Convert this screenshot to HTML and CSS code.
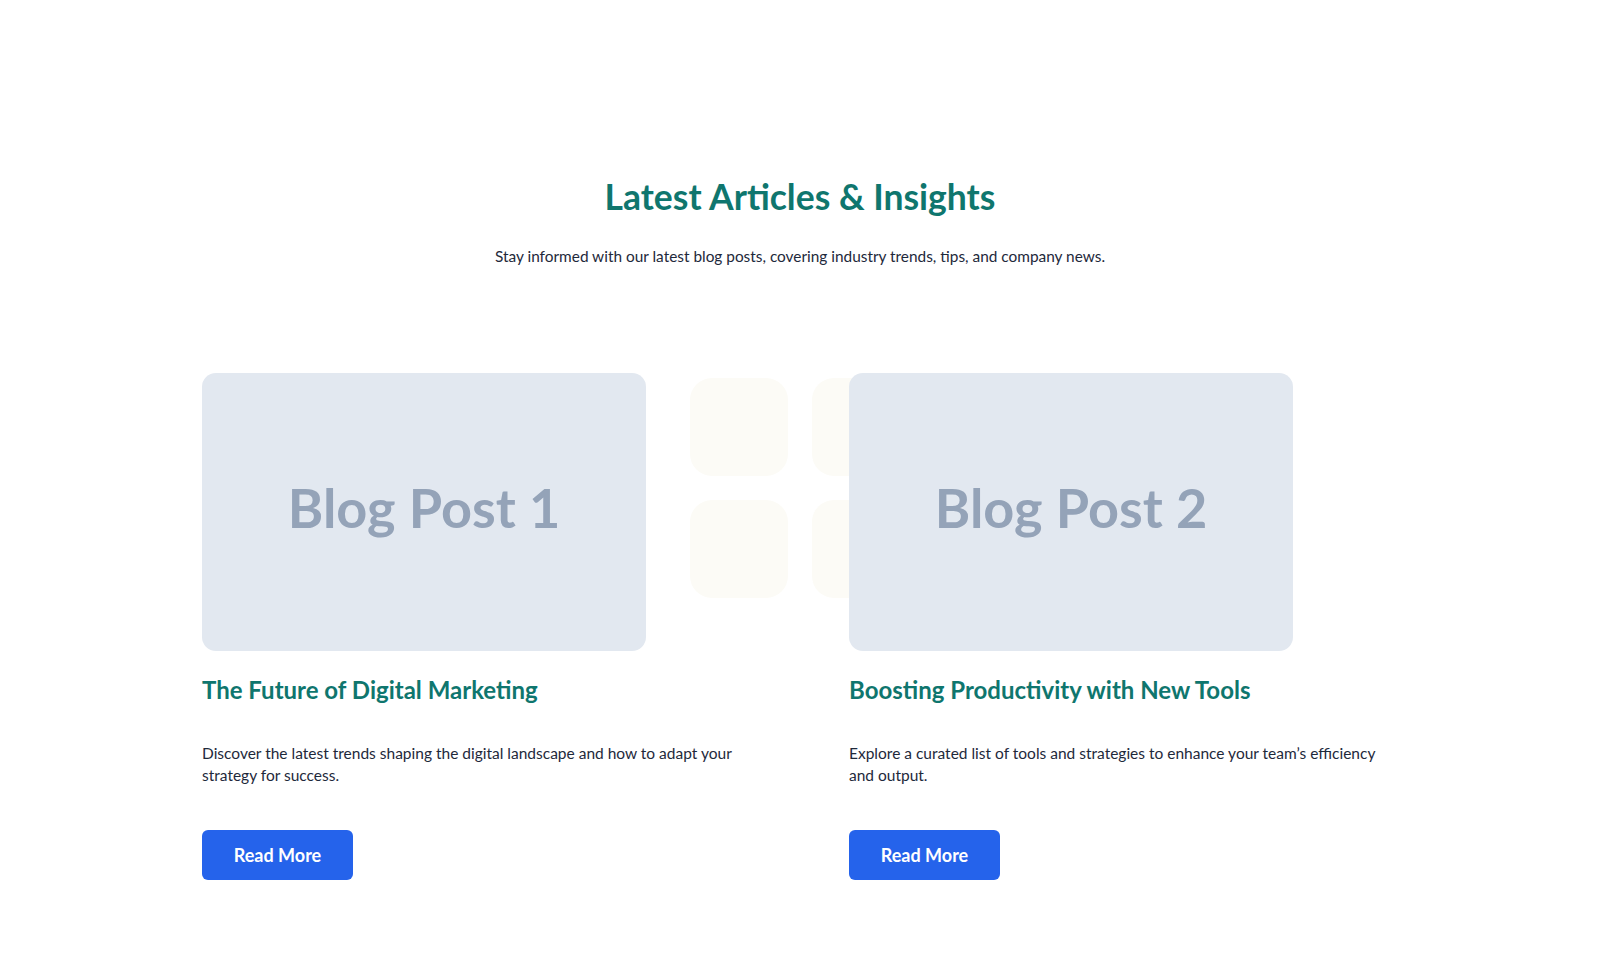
FILE: index.html
```html
<!DOCTYPE html>
<html lang="en">
<head>
<meta charset="utf-8">
<title>Latest Articles &amp; Insights</title>
<link rel="stylesheet" href="styles.css">
</head>
<body>
<section class="blog">
  <header class="blog-head">
    <h2 class="blog-title">Latest Articles &amp; Insights</h2>
    <p class="blog-sub">Stay informed with our latest blog posts, covering industry trends, tips, and company news.</p>
  </header>

  <div class="blog-grid">
    <div class="deco" aria-hidden="true">
      <span></span><span></span><span></span><span></span>
    </div>

    <article class="post">
      <div class="post-thumb"><span>Blog Post 1</span></div>
      <h3 class="post-title">The Future of Digital Marketing</h3>
      <p class="post-text">Discover the latest trends shaping the digital landscape and how to adapt your strategy for success.</p>
      <a class="btn" href="#">Read More</a>
    </article>

    <article class="post">
      <div class="post-thumb"><span>Blog Post 2</span></div>
      <h3 class="post-title">Boosting Productivity with New Tools</h3>
      <p class="post-text">Explore a curated list of tools and strategies to enhance your team’s efficiency and output.</p>
      <a class="btn" href="#">Read More</a>
    </article>
  </div>
</section>
</body>
</html>
```

FILE: styles.css
```css
* { box-sizing: border-box; }

body {
  margin: 0;
  background: #ffffff;
  font-family: "Lato", "Noto Sans", sans-serif;
  color: #1e293b;
}

.blog {
  padding: 175px 0 80px;
}

.blog-head {
  text-align: center;
}

.blog-title {
  margin: 0;
  font-size: 35.5px;
  line-height: 43px;
  font-weight: 700;
  color: #0f766e;
}

.blog-sub {
  margin: 27px 0 0;
  font-size: 15.4px;
  line-height: 22px;
  color: #1e293b;
}

.blog-grid {
  position: relative;
  width: 1196px;
  margin: 106px auto 0;
  display: grid;
  grid-template-columns: 549px 549px;
  column-gap: 98px;
}

/* faint tile pattern sitting behind the cards */
.deco {
  position: absolute;
  left: 488px;
  top: 5px;
  display: grid;
  grid-template-columns: 98px 98px;
  grid-auto-rows: 98px;
  gap: 24px;
  z-index: 0;
}

.deco span {
  background: #fcfbf6;
  border-radius: 22px;
}

.post {
  position: relative;
  z-index: 1;
}

.post-thumb {
  width: 444px;
  height: 278px;
  padding-bottom: 10px;
  border-radius: 14px;
  background: #e2e8f0;
  display: flex;
  align-items: center;
  justify-content: center;
}

.post-thumb span {
  font-family: "Lato", sans-serif;
  font-weight: 700;
  font-size: 54px;
  color: #94a3b8;
}

.post-title {
  margin: 23px 0 0;
  font-size: 24px;
  line-height: 31px;
  font-weight: 700;
  color: #0f766e;
}

.post-text {
  margin: 38px 0 0;
  font-size: 15.5px;
  line-height: 21.5px;
  color: #1e293b;
}

.btn {
  display: inline-flex;
  align-items: center;
  justify-content: center;
  margin-top: 44px;
  width: 151px;
  height: 50px;
  border-radius: 6px;
  background: #2563eb;
  color: #ffffff;
  font-size: 18px;
  font-weight: 700;
  text-decoration: none;
}
```
